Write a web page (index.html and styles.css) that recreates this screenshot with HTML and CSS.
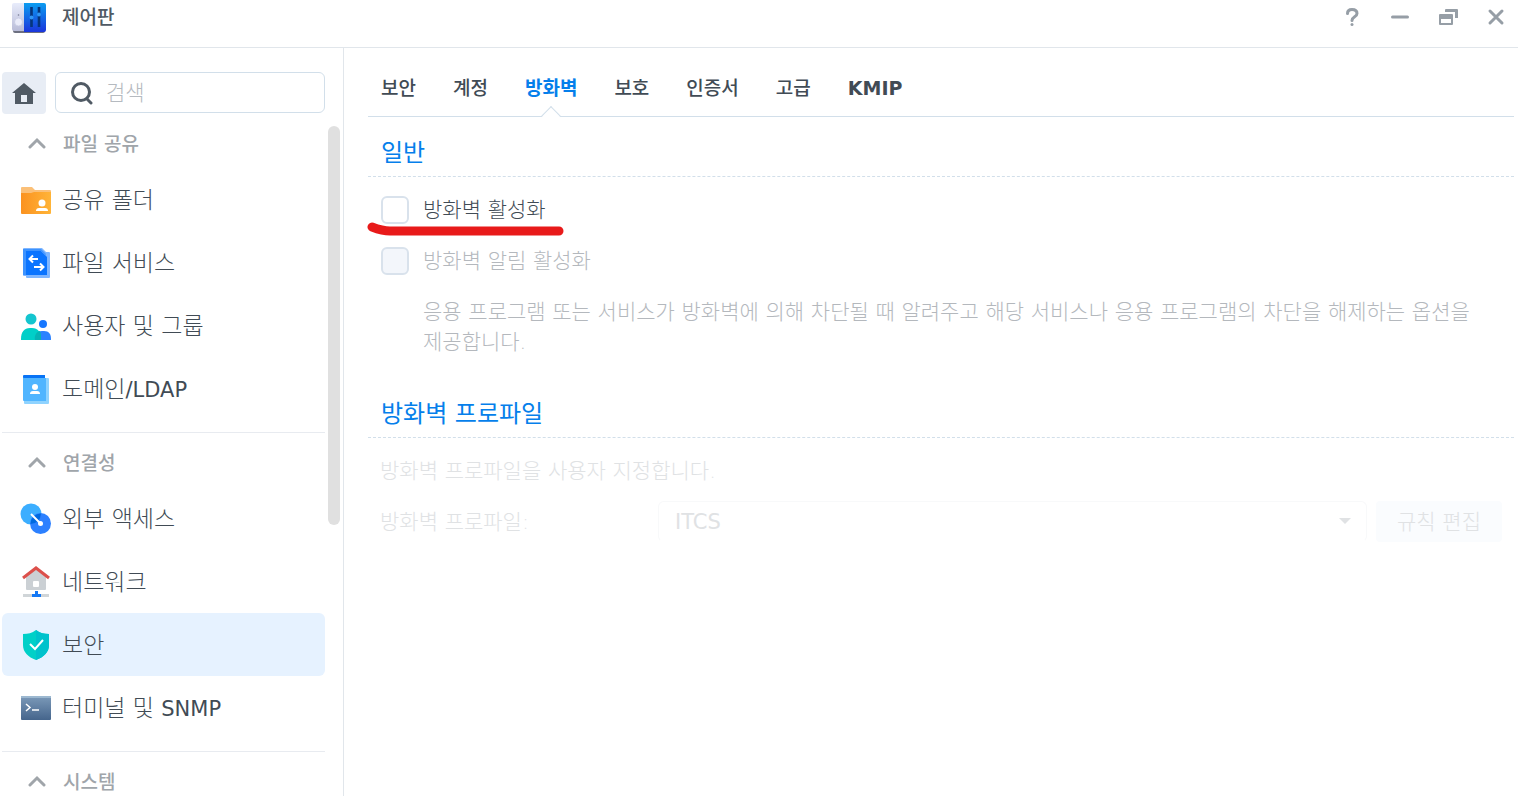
FILE: index.html
```
<!DOCTYPE html>
<html lang="ko">
<head>
    <meta charset="UTF-8">
    <title>제어판</title>
    <link rel="stylesheet" href="styles.css">
</head>
<body>
    <header class="titlebar">
        <svg class="app-icon" viewBox="0 0 36 32">
            <defs>
                <linearGradient id="panelBlue" x1="0" y1="0" x2="0" y2="1"><stop offset="0" stop-color="#0c9df0"/><stop offset="1" stop-color="#1a35dc"/></linearGradient>
                <linearGradient id="panelGrey" x1="0" y1="0" x2="0" y2="1"><stop offset="0" stop-color="#e8ecfb"/><stop offset="1" stop-color="#b9bcd8"/></linearGradient>
            </defs>
            <rect x="2" y="4" width="32" height="28" rx="2" fill="#6d7080"/>
            <path d="M3 2h11v28H3a2 2 0 0 1-2-2V4a2 2 0 0 1 2-2z" fill="url(#panelGrey)"/>
            <path d="M13 2h20a2 2 0 0 1 2 2v25a2 2 0 0 1-2 2H13z" fill="url(#panelBlue)"/>
            <circle cx="7.500" cy="21" r="4" fill="#e9ebf9" stroke="#c3c7df" stroke-width=".7"/>
            <circle cx="7.500" cy="14" r=".8" fill="#777b92"/>
            <path d="M20.500 6v20M28 6v20" stroke="#06357c" stroke-width="2.600"/>
            <circle cx="20.500" cy="16.500" r="2" fill="#2f96f5"/>
            <circle cx="28" cy="13.500" r="2" fill="#2f96f5"/>
        </svg>
        <h1>제어판</h1>
        <div class="window-buttons">
            <button aria-label="도움말"><svg viewBox="0 0 24 24"><path d="M7.500 8.500C7.500 5.500 9 4.500 12 4.500s5 1.500 5 4c0 3.500-5 3-5 7" /><circle cx="12" cy="19.500" r="1.500" class="solid"/></svg></button>
            <button aria-label="최소화"><svg viewBox="0 0 24 24"><path d="M4.500 12h15"/></svg></button>
            <button aria-label="복원"><svg viewBox="0 0 24 24"><path d="M10 4h11a1 1 0 0 1 1 1v8h-3V7H9V5a1 1 0 0 1 1-1z" class="solid"/><path d="M4 9h12a1 1 0 0 1 1 1v9a1 1 0 0 1-1 1H4a1 1 0 0 1-1-1v-9a1 1 0 0 1 1-1zm1 5v4h10v-4z" class="solid" fill-rule="evenodd"/></svg></button>
            <button aria-label="닫기"><svg viewBox="0 0 24 24"><path d="M6 6l12 12M18 6L6 18"/></svg></button>
        </div>
    </header>

    <div class="content">
        <aside class="sidebar">
            <div class="search-row">
                <button class="home" aria-label="홈"><svg viewBox="0 0 24 24"><path d="M12 2l12 10h-3v11H3V12H0zM9 14v7h6v-7z" fill="#505a64" fill-rule="evenodd"/></svg></button>
                <label class="search">
                    <svg viewBox="0 0 24 24"><circle cx="11" cy="11" r="8.500"/><path d="M17 18l4 4"/></svg>
                    <input type="text" placeholder="검색" aria-label="검색">
                </label>
            </div>
            <div class="scroll-area">
                <nav class="menu">
                    <h2><svg viewBox="0 0 20 12"><path d="M3 10l7-7 7 7"/></svg>파일 공유</h2>
                    <a href="#"><svg viewBox="0 0 32 32">
                        <defs><linearGradient id="folder"><stop offset="0" stop-color="#fb9220"/><stop offset="1" stop-color="#ffb438"/></linearGradient></defs>
                        <path d="M2 3h10l3 3h15a1 1 0 0 1 1 1v10H1V4a1 1 0 0 1 1-1z" fill="#fbc078"/>
                        <path d="M1 9h10l3-1h17v21a1 1 0 0 1-1 1H2a1 1 0 0 1-1-1z" fill="url(#folder)"/>
                        <circle cx="22" cy="19" r="3.500" fill="#fff"/><path d="M16 27c0-2 1-3 3-3h6c2 0 3 1 3 3z" fill="#fff"/>
                    </svg>공유 폴더</a>
                    <a href="#"><svg viewBox="0 0 32 32">
                        <path d="M4 1h18l4 4h3a1 1 0 0 1 1 1v24a1 1 0 0 1-1 1H7a1 1 0 0 1-1-1v-1H4a1 1 0 0 1-1-1V2a1 1 0 0 1 1-1z" fill="#7fb6ff"/>
                        <path d="M6 4h15l6 6v18H6z" fill="#0a74ff"/>
                        <path d="M3 2h18l5 5v1l-5-4H6v24H3z" fill="#3d93ff"/>
                        <path d="M18 12h-8m3-3.500L9.500 12l3.500 3.500M14 20h9m-3-3.500l3.500 3.500-3.500 3.500" fill="none" stroke="#fff" stroke-width="2"/>
                    </svg>파일 서비스</a>
                    <a href="#"><svg viewBox="0 0 32 32">
                        <circle cx="23" cy="14" r="4" fill="#1677ff"/><path d="M14 30c0-6 3-9 8-9h2c5 0 7 3 7 8 0 1 0 1-1 1z" fill="#2b82ff"/>
                        <circle cx="11" cy="9" r="5.500" fill="#14c5cf"/><path d="M1 29c0-7 3-11 9-11h2c6 0 9 4 9 11 0 1 0 1-1 1H2c-1 0-1 0-1-1z" fill="#00cfc8"/>
                        <path d="M15 30c-1-4 1-8 5-9 1 2 1 5 1 9z" fill="#05b3b5"/>
                    </svg>사용자 및 그룹</a>
                    <a href="#"><svg viewBox="0 0 32 32">
                        <rect x="4" y="5" width="25" height="26" rx="1" fill="#8fd3ff"/>
                        <path d="M4 2h21v5H3V3a1 1 0 0 1 1-1z" fill="#0873f5"/>
                        <path d="M3 4c0 1 1 1 2 1h21v23H4a1 1 0 0 1-1-1z" fill="#50b5ff"/>
                        <circle cx="15" cy="14" r="3" fill="#fff"/><path d="M10 21c0-2 1-3 3-3h4c2 0 3 1 3 3z" fill="#fff"/>
                    </svg><span>도메인<span class="latin">/LDAP</span></span></a>
                    <hr>
                    <h2><svg viewBox="0 0 20 12"><path d="M3 10l7-7 7 7"/></svg>연결성</h2>
                    <a href="#"><svg viewBox="0 0 32 32">
                        <circle cx="11" cy="11" r="10.500" fill="#3caeff"/><circle cx="20.500" cy="20.500" r="10.500" fill="#2c80ff"/>
                        <path d="M21 10.500A10.500 10.500 0 0 1 10.500 21 10.500 10.500 0 0 1 21 10.500z" fill="#0069e0"/>
                        <path d="M11 11l9 9" stroke="#fff" stroke-width="2"/><circle cx="20.500" cy="20.500" r="2.500" fill="#fff"/>
                    </svg>외부 액세스</a>
                    <a href="#"><svg viewBox="0 0 32 32">
                        <path d="M16 2l10 8v13a1 1 0 0 1-1 1H7a1 1 0 0 1-1-1V10z" fill="#cbd0d4"/>
                        <path d="M3 12L16 2l13 10" fill="none" stroke="#dc504b" stroke-width="3"/>
                        <rect x="13" y="15" width="6" height="6" rx="1" fill="#fff"/>
                        <path d="M3 28h26v3H3z" fill="#d0d5d8"/><path d="M15 25h3v3h3v3h-9v-3h3z" fill="#1478f5"/>
                    </svg>네트워크</a>
                    <a href="#" class="selected"><svg viewBox="0 0 32 32">
                        <path d="M16 1c4 3 8 4 13 4v11c0 7-5 12-13 15C8 28 3 23 3 16V5c5 0 9-1 13-4z" fill="#00d0c8"/>
                        <path d="M16 1c4 3 8 4 13 4v11c0 7-5 12-13 15z" fill="#00c2cc"/>
                        <path d="M10 15l5 5 8-9" fill="none" stroke="#fff" stroke-width="2"/>
                    </svg>보안</a>
                    <a href="#"><svg viewBox="0 0 32 32">
                        <defs><linearGradient id="term" x1="0" y1="0" x2="0" y2="1"><stop offset="0" stop-color="#7c9ab9"/><stop offset="1" stop-color="#45658c"/></linearGradient></defs>
                        <rect x="1" y="4" width="30" height="24" rx="1" fill="url(#term)"/><path d="M1 4h30v2H1z" fill="#9cb8d0"/>
                        <path d="M6 12l4 3.500L6 19M12 18h7" fill="none" stroke="#fff" stroke-width="1.500"/>
                    </svg><span>터미널 및 <span class="latin">SNMP</span></span></a>
                    <hr>
                    <h2><svg viewBox="0 0 20 12"><path d="M3 10l7-7 7 7"/></svg>시스템</h2>
                </nav>
                <div class="scrollbar"></div>
            </div>
        </aside>

        <main>
            <nav class="tabs">
                <a href="#">보안</a>
                <a href="#">계정</a>
                <a href="#" class="active">방화벽</a>
                <a href="#">보호</a>
                <a href="#">인증서</a>
                <a href="#">고급</a>
                <a href="#" class="latin">KMIP</a>
            </nav>

            <section>
                <h3>일반</h3>
                <div class="check-row">
                    <input type="checkbox" id="firewall">
                    <label for="firewall">방화벽 활성화</label>
                    <svg class="marker" viewBox="0 0 198 16"><path d="M5 6c8 3 11 4 18 4h169" fill="none" stroke="#e81a1a" stroke-width="9" stroke-linecap="round"/></svg>
                </div>
                <div class="check-row off">
                    <input type="checkbox" id="notify" disabled>
                    <label for="notify">방화벽 알림 활성화</label>
                </div>
                <p class="note">응용 프로그램 또는 서비스가 방화벽에 의해 차단될 때 알려주고 해당 서비스나 응용 프로그램의 차단을 해제하는 옵션을 제공합니다.</p>
            </section>

            <section>
                <h3>방화벽 프로파일</h3>
                <div class="profile">
                    <p>방화벽 프로파일을 사용자 지정합니다.</p>
                    <div class="profile-row">
                        <label for="profile">방화벽 프로파일:</label>
                        <div class="select-box">
                            <select id="profile" disabled>
                                <option>ITCS</option>
                            </select>
                        </div>
                        <button disabled>규칙 편집</button>
                    </div>
                </div>
            </section>
        </main>
    </div>
</body>
</html>
```
FILE: styles.css
```
* {
    box-sizing: border-box;
}
body {
    margin: 0;
    height: 100vh;
    display: flex;
    flex-direction: column;
    overflow: hidden;
    background: #fff;
    color: #414b55;
    font-family: "DejaVu Sans", "Noto Sans CJK KR", sans-serif;
    font-size: 21px;
    font-weight: 300;
}
h1, h2, h3, p {
    margin: 0;
}
a {
    color: inherit;
    text-decoration: none;
}
button, input, select {
    font: inherit;
    color: inherit;
    margin: 0;
}
button {
    padding: 0;
    border: none;
    background: none;
}
/* the light weight is too thin for latin letters */
.latin {
    font-size: 21px;
    font-weight: normal;
}

/* title bar */
.titlebar {
    display: flex;
    align-items: center;
    height: 48px;
    flex-shrink: 0;
    padding: 0 10px 14px 11px;
    border-bottom: 1px solid #e1e6eb;
}
.app-icon {
    width: 36px;
    height: 32px;
}
h1 {
    margin-left: 15px;
    padding-bottom: 2px;
    font-size: 19px;
    font-weight: 500;
    color: #505a64;
}
.window-buttons {
    display: flex;
    gap: 24px;
    margin-left: auto;
}
.window-buttons button, .window-buttons svg {
    display: block;
    width: 24px;
    height: 24px;
}
.window-buttons svg {
    fill: none;
    stroke: #969ea6;
    stroke-width: 3;
    stroke-linecap: round;
}
.window-buttons .solid {
    fill: #969ea6;
    stroke: none;
}

.content {
    display: flex;
    flex: 1;
    min-height: 0;
}

/* sidebar */
.sidebar {
    display: flex;
    flex-direction: column;
    width: 344px;
    flex-shrink: 0;
    padding: 24px 3px 0 2px;
    border-right: 1px solid #e1e6eb;
}
.search-row {
    display: flex;
    gap: 9px;
    height: 42px;
    flex-shrink: 0;
    padding-right: 15px;
}
.home {
    width: 44px;
    border-radius: 4px;
    background: #e8edf5;
}
.home svg {
    display: block;
    width: 24px;
    height: 24px;
    margin: 0 auto;
}
.search {
    display: flex;
    align-items: center;
    flex: 1;
    min-width: 0;
    height: 41px;
    padding: 0 14px;
    border: 1px solid #d2dfea;
    border-radius: 6px;
}
.search svg {
    width: 24px;
    height: 24px;
    fill: none;
    stroke: #505a64;
    stroke-width: 3;
    stroke-linecap: round;
}
.search input {
    flex: 1;
    min-width: 0;
    padding: 0 12px;
    border: none;
    outline: none;
    background: none;
}
.search input::placeholder {
    color: #b5bac0;
}
.scroll-area {
    display: flex;
    gap: 3px;
    flex: 1;
    min-height: 0;
    overflow: hidden;
}
.menu {
    flex: 1;
}
.menu h2 {
    display: flex;
    align-items: center;
    height: 54px;
    padding: 3px 0 0 25px;
    font-size: 19px;
    font-weight: 500;
    color: #a0a5aa;
}
.menu h2 svg {
    width: 20px;
    height: 12px;
    margin-right: 16px;
    fill: none;
    stroke: #a0a5aa;
    stroke-width: 3;
    stroke-linecap: round;
}
.menu a {
    display: flex;
    align-items: center;
    gap: 10px;
    height: 63px;
    padding: 0 0 3px 18px;
    border-radius: 6px;
    font-size: 23px;
}
.menu a svg {
    width: 32px;
    height: 32px;
    margin-top: 3px;
}
.menu a.selected {
    background: #e6f2ff;
}
.menu hr {
    margin: 12px 0 0;
    border: none;
    border-top: 1px solid #e8ebf0;
}
.scrollbar {
    width: 12px;
    height: 399px;
    margin-top: 12px;
    border-radius: 6px;
    background: #e0e0e0;
}

/* main panel */
main {
    flex: 1;
    min-width: 0;
    padding: 10px 4px 0 24px;
}
.tabs {
    display: flex;
    gap: 37px;
    height: 59px;
    padding: 0 13px;
    border-bottom: 1px solid #d2dfea;
    font-size: 19px;
    font-weight: 500;
    line-height: 60px;
}
.tabs .latin {
    font-size: 19px;
    font-weight: bold;
}
.tabs .active {
    position: relative;
    font-weight: bold;
    color: #057feb;
}
.tabs .active::after {
    content: "";
    position: absolute;
    left: 50%;
    bottom: -7px;
    width: 13px;
    height: 13px;
    margin-left: -7px;
    border: solid #d2dfea;
    border-width: 1px 0 0 1px;
    background: linear-gradient(135deg, #fff 50%, transparent 50%);
    transform: rotate(45deg);
}
h3 {
    height: 60px;
    padding: 6px 13px 0;
    border-bottom: 1px dashed #d2dfea;
    font-size: 24px;
    font-weight: normal;
    line-height: 60px;
    color: #057feb;
}
.check-row {
    position: relative;
    display: flex;
    align-items: center;
    gap: 14px;
    height: 51px;
    padding-left: 13px;
}
h3 + .check-row {
    margin-top: 7px;
}
.check-row label {
    padding-bottom: 3px;
}
.check-row input {
    appearance: none;
    width: 28px;
    height: 28px;
    border: 2px solid #d9e2ec;
    border-radius: 6px;
    background: #fff;
}
.check-row input:disabled {
    background: #f3f6fb;
}
.off, .note {
    color: #b4b8bd;
}
.marker {
    position: absolute;
    left: -1px;
    top: 37px;
    width: 198px;
    height: 16px;
}
.note {
    padding: 11px 24px 0 55px;
    line-height: 30px;
}
section + section {
    margin-top: 21px;
}
.profile {
    padding: 12px 12px 0;
    color: #e0e2e4;
}
.profile p {
    line-height: 42px;
}
.profile-row {
    display: flex;
    align-items: center;
    height: 41px;
    margin-top: 9px;
}
.profile-row label {
    width: 278px;
    padding-bottom: 3px;
}
.select-box {
    position: relative;
    flex: 1;
}
.select-box::after {
    content: "";
    position: absolute;
    right: 16px;
    top: 17px;
    border: 6px solid transparent;
    border-top-color: #e0e2e4;
    border-bottom: none;
}
.profile-row select {
    appearance: none;
    display: block;
    width: 100%;
    height: 41px;
    padding: 0 16px;
    border: 1px solid #f8f9fa;
    border-bottom-color: transparent;
    border-radius: 6px;
    background: #fff;
    font-weight: normal;
    opacity: 1;
}
.profile-row button {
    width: 126px;
    height: 41px;
    margin-left: 9px;
    padding-bottom: 4px;
    border-radius: 4px;
    background: #fafcfe;
}
```
